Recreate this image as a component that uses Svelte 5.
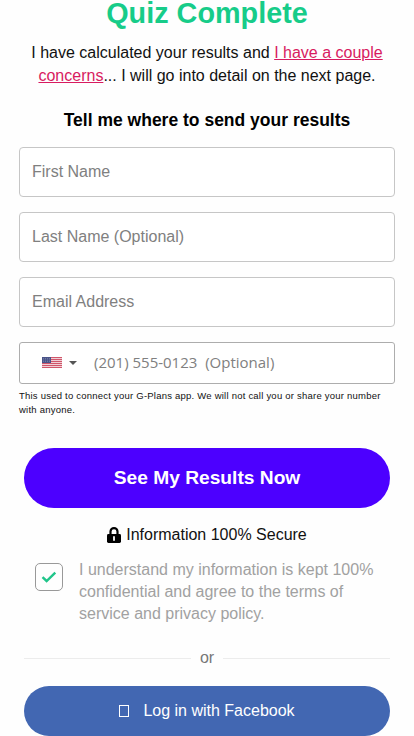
<script>
  const fields = ['First Name', 'Last Name (Optional)', 'Email Address'];
  const stripes = [0, 2, 4, 6, 8, 10];
</script>

<main>
  <h1>Quiz Complete</h1>
  <p class="intro">
    <span class="l1">I have calculated your results and <u>I have a couple</u></span><br />
    <span class="l2"><u>concerns</u>... I will go into detail on the next page.</span>
  </p>
  <h2>Tell me where to send your results</h2>

  <form>
    {#each fields as field}
      <input class="field" placeholder={field} />
    {/each}
    <div class="phone">
      <svg class="flag" width="20" height="11" viewBox="0 0 20 11">
        <rect width="20" height="11" fill="#f0cfd6" />
        {#each stripes as y}
          <rect {y} width="20" height="1" fill="#d0566a" />
        {/each}
        <rect width="9" height="6" fill="#4a5488" />
        <path d="M1 1.5h7M1 3h7M1 4.5h7" stroke="#8790b4" stroke-width=".6" stroke-dasharray="1 1" />
      </svg>
      <span class="caret"></span>
      <input placeholder="(201) 555-0123&nbsp; (Optional)" />
    </div>
    <p class="note">
      <span>This used to connect your G-Plans app. We will not call you or share your number</span><br />
      <span>with anyone.</span>
    </p>

    <div class="actions">
      <button type="button" class="submit"><span>See My Results Now</span></button>
      <div class="secure">
        <svg width="14" height="16" viewBox="0 0 14 16">
          <path d="M3.5 8V4.6a3.5 3.5 0 0 1 7 0V8" fill="none" stroke="#000" stroke-width="2.2" />
          <rect y="7" width="14" height="9" rx="1.4" />
          <path d="M7 10v3" stroke="#fff" stroke-width="1.8" stroke-linecap="round" />
        </svg>
        <span>Information 100% Secure</span>
      </div>
      <div class="consent">
        <span class="box">
          <svg width="16" height="12" viewBox="0 0 16 12">
            <path d="M1.5 6.2 5.6 10 14.3 1.6" fill="none" stroke="#20c58a" stroke-width="2.4" />
          </svg>
        </span>
        <p>I understand my information is kept 100%<br />confidential and agree to the terms of<br />service and privacy policy.</p>
      </div>
      <div class="or"><span>or</span></div>
      <button type="button" class="facebook"><i></i><span>Log in with Facebook</span></button>
    </div>
  </form>
</main>

<style>
  :global(body) { background: #fff; overflow: hidden; }
  main {
    box-sizing: border-box;
    width: 414px;
    height: 736px;
    padding: 0 19px;
    overflow: hidden;
    background: #fefefe;
    color: #111;
    font-family: "Liberation Sans", Arial, sans-serif;
    font-size: 16px;
  }
  h1, h2, p { margin: 0; }
  h1 {
    height: 41px;
    color: #17cc89;
    font-size: 28.8px;
    line-height: 27px;
    text-align: center;
    white-space: nowrap;
  }
  .intro { height: 66px; line-height: 23px; text-align: center; white-space: nowrap; }
  .intro u { color: #d81b60; text-underline-offset: 1px; }
  h2 { height: 40px; color: #000; font-size: 17.5px; line-height: 26px; text-align: center; white-space: nowrap; }
  input { color: #333; font: inherit; outline: none; }
  input::placeholder { color: #808080; opacity: 1; }
  .field {
    box-sizing: border-box;
    display: block;
    width: 376px;
    height: 50px;
    margin-bottom: 15px;
    padding: 0 12px;
    border: 1px solid #c6c6c6;
    border-radius: 4px;
    background: #fff;
  }
  .phone {
    box-sizing: border-box;
    display: flex;
    align-items: center;
    height: 42px;
    padding: 0 0 1px 22px;
    border: 1px solid #adadad;
    border-radius: 3px;
    background: #fff;
  }
  .caret {
    width: 0;
    margin: 0 17px 0 7px;
    border: 4px solid transparent;
    border-top-color: #555;
    border-bottom: 0;
  }
  .phone input { width: 250px; padding: 0 0 2px; border: 0; background: none; font-family: "Open Sans", sans-serif; font-size: 15px; }
  .note {
    box-sizing: border-box;
    height: 64px;
    padding-top: 5px;
    font-size: 9.5px;
    line-height: 14px;
    letter-spacing: .225px;
    white-space: nowrap;
  }
  .actions { padding: 0 5px; }
  button {
    display: flex;
    align-items: center;
    justify-content: center;
    width: 100%;
    padding: 0;
    border: 0;
    color: #fff;
    font-family: inherit;
    white-space: nowrap;
  }
  .submit { height: 60px; border-radius: 30px; background: #4c00ff; font-size: 19.2px; font-weight: bold; }
  .secure { display: flex; align-items: center; justify-content: center; gap: 5px; height: 50px; padding-top: 2px; }
  .secure svg { margin-bottom: 1px; }
  .consent { display: flex; height: 84px; color: #a1a1a1; }
  .consent p { margin-top: -1px; line-height: 22px; white-space: nowrap; }
  .box {
    box-sizing: border-box;
    display: flex;
    align-items: center;
    justify-content: center;
    width: 28px;
    height: 28px;
    margin: 3px 16px 0 11px;
    border: 1px solid #999;
    border-radius: 5px;
  }
  .or { display: flex; align-items: center; gap: 9px; height: 28px; margin-bottom: 14px; color: #777; }
  .or span { margin-top: -1px; }
  .or::before, .or::after { flex: 1; height: 1px; background: #ececec; content: ""; }
  .facebook { height: 50px; border-radius: 25px; background: #4267b2; font-size: 16px; }
  .facebook i { box-sizing: border-box; width: 10px; height: 12px; margin-right: 14px; border: 1px solid #fff; }
</style>
